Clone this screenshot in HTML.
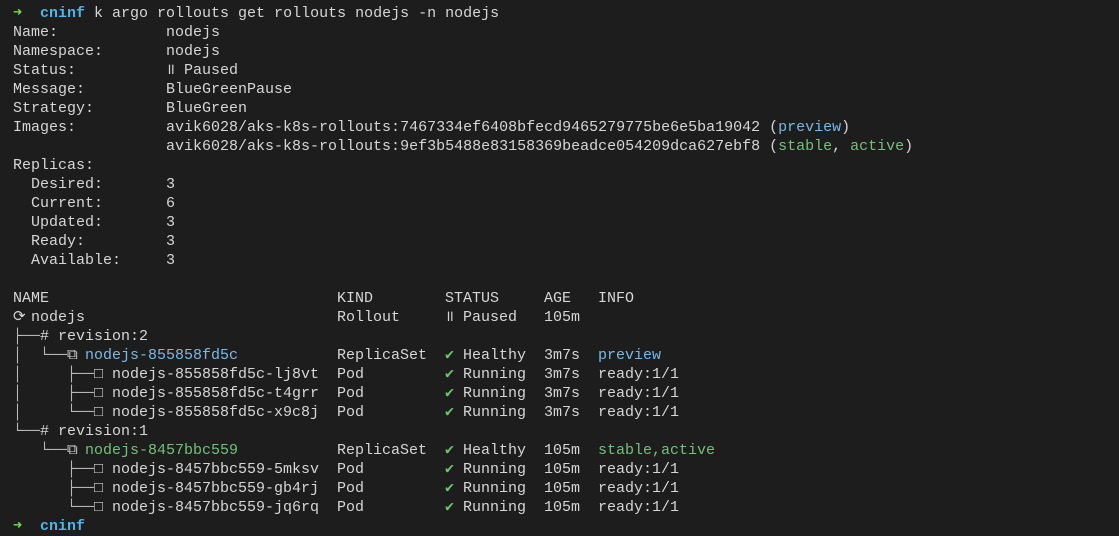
<!DOCTYPE html>
<html><head><meta charset="utf-8"><style>
html,body{margin:0;padding:0;background:#1d1d1d;width:1119px;height:523px;overflow:hidden}
.r{position:absolute;left:13px;height:19px;font-family:"Liberation Mono","DejaVu Sans Mono",monospace;font-size:15px;line-height:19px;color:#d6d6d6;white-space:pre}
.c{position:absolute;top:0;white-space:pre}
.g{display:inline-block;width:9px;text-align:center;overflow:visible}
.b{color:#7ab8e6}.gr{color:#73c17a}.ok{color:#6cc76c}
.ar{color:#74e04a;font-weight:bold}.cn{color:#4cb5ea;font-weight:bold}
.t{color:#b8b8b8}
</style></head><body>
<div class="r" style="top:4px"><span class="ar g">➜</span>  <span class="cn">cninf</span> k argo rollouts get rollouts nodejs -n nodejs</div>
<div class="r" style="top:23px">Name:            nodejs</div>
<div class="r" style="top:42px">Namespace:       nodejs</div>
<div class="r" style="top:61px">Status:          <span class="g">॥</span> Paused</div>
<div class="r" style="top:80px">Message:         BlueGreenPause</div>
<div class="r" style="top:99px">Strategy:        BlueGreen</div>
<div class="r" style="top:118px">Images:          avik6028/aks-k8s-rollouts:7467334ef6408bfecd9465279775be6e5ba19042 (<span class="b">preview</span>)</div>
<div class="r" style="top:137px">                 avik6028/aks-k8s-rollouts:9ef3b5488e83158369beadce054209dca627ebf8 (<span class="gr">stable</span>, <span class="gr">active</span>)</div>
<div class="r" style="top:156px">Replicas:</div>
<div class="r" style="top:175px">  Desired:       3</div>
<div class="r" style="top:194px">  Current:       6</div>
<div class="r" style="top:213px">  Updated:       3</div>
<div class="r" style="top:232px">  Ready:         3</div>
<div class="r" style="top:251px">  Available:     3</div>

<div class="r" style="top:289px">NAME<span class="c" style="left:324px">KIND</span><span class="c" style="left:432px">STATUS</span><span class="c" style="left:531px">AGE</span><span class="c" style="left:585px">INFO</span></div>
<div class="r" style="top:308px"><span class="g">⟳</span> nodejs<span class="c" style="left:324px">Rollout</span><span class="c" style="left:432px"><span class="g">॥</span> Paused</span><span class="c" style="left:531px">105m</span></div>
<div class="r" style="top:327px"><span class="t">├──</span># revision:2</div>
<div class="r" style="top:346px"><span class="t">│  └──</span><span class="g">⧉</span> <span class="b">nodejs-855858fd5c</span><span class="c" style="left:324px">ReplicaSet</span><span class="c" style="left:432px"><span class="ok g">✔</span> Healthy</span><span class="c" style="left:531px">3m7s</span><span class="c b" style="left:585px">preview</span></div>
<div class="r" style="top:365px"><span class="t">│     ├──</span><span class="g">□</span> nodejs-855858fd5c-lj8vt<span class="c" style="left:324px">Pod</span><span class="c" style="left:432px"><span class="ok g">✔</span> Running</span><span class="c" style="left:531px">3m7s</span><span class="c" style="left:585px">ready:1/1</span></div>
<div class="r" style="top:384px"><span class="t">│     ├──</span><span class="g">□</span> nodejs-855858fd5c-t4grr<span class="c" style="left:324px">Pod</span><span class="c" style="left:432px"><span class="ok g">✔</span> Running</span><span class="c" style="left:531px">3m7s</span><span class="c" style="left:585px">ready:1/1</span></div>
<div class="r" style="top:403px"><span class="t">│     └──</span><span class="g">□</span> nodejs-855858fd5c-x9c8j<span class="c" style="left:324px">Pod</span><span class="c" style="left:432px"><span class="ok g">✔</span> Running</span><span class="c" style="left:531px">3m7s</span><span class="c" style="left:585px">ready:1/1</span></div>
<div class="r" style="top:422px"><span class="t">└──</span># revision:1</div>
<div class="r" style="top:441px"><span class="t">   └──</span><span class="g">⧉</span> <span class="gr">nodejs-8457bbc559</span><span class="c" style="left:324px">ReplicaSet</span><span class="c" style="left:432px"><span class="ok g">✔</span> Healthy</span><span class="c" style="left:531px">105m</span><span class="c gr" style="left:585px">stable,active</span></div>
<div class="r" style="top:460px"><span class="t">      ├──</span><span class="g">□</span> nodejs-8457bbc559-5mksv<span class="c" style="left:324px">Pod</span><span class="c" style="left:432px"><span class="ok g">✔</span> Running</span><span class="c" style="left:531px">105m</span><span class="c" style="left:585px">ready:1/1</span></div>
<div class="r" style="top:479px"><span class="t">      ├──</span><span class="g">□</span> nodejs-8457bbc559-gb4rj<span class="c" style="left:324px">Pod</span><span class="c" style="left:432px"><span class="ok g">✔</span> Running</span><span class="c" style="left:531px">105m</span><span class="c" style="left:585px">ready:1/1</span></div>
<div class="r" style="top:498px"><span class="t">      └──</span><span class="g">□</span> nodejs-8457bbc559-jq6rq<span class="c" style="left:324px">Pod</span><span class="c" style="left:432px"><span class="ok g">✔</span> Running</span><span class="c" style="left:531px">105m</span><span class="c" style="left:585px">ready:1/1</span></div>
<div class="r" style="top:517px"><span class="ar g">➜</span>  <span class="cn">cninf</span></div>
</body></html>
